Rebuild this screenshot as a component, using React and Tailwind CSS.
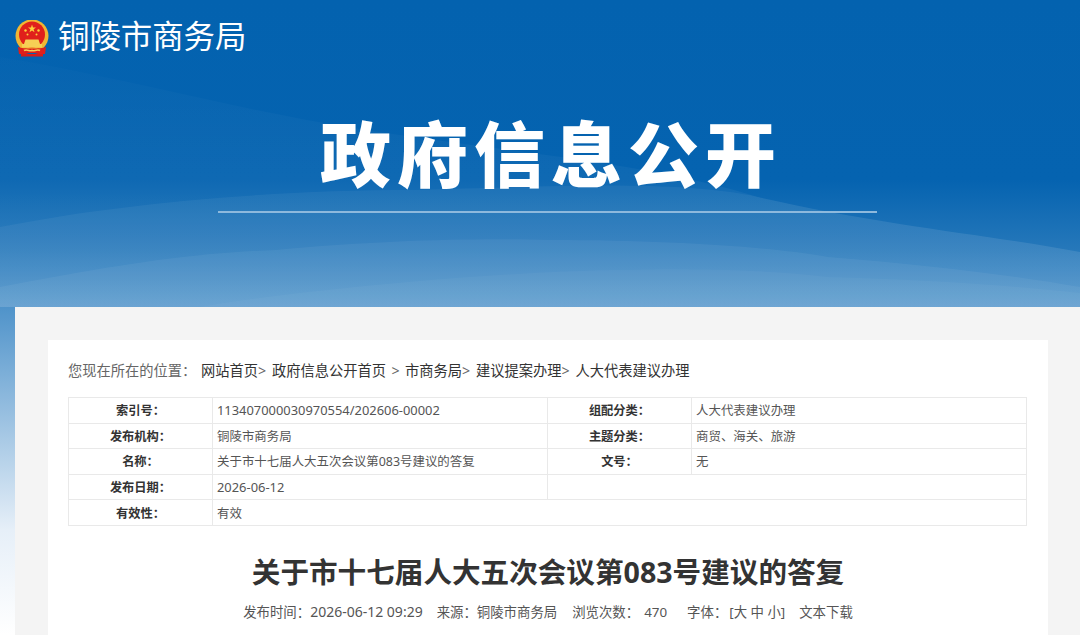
const infoRows = [
  { a: "索引号：", b: <span className="text-[12.9px] leading-none">113407000030970554/202606-00002</span>, c: "组配分类：", d: "人大代表建议办理" },
  { a: "发布机构：", b: "铜陵市商务局", c: "主题分类：", d: "商贸、海关、旅游" },
  { a: "名称：", b: "关于市十七届人大五次会议第083号建议的答复", c: "文号：", d: "无" },
];

const labelCell = "border border-[#e9e9e9] text-center font-bold text-[#333] px-0 pt-[2px] pb-0";
const valueCell = "border border-[#e9e9e9] pl-[4px] pr-0 pt-[2px] pb-0 text-[12.45px] text-[#555]";

function Emblem() {
  return (
    <svg width="34" height="37" viewBox="0 0 34 37" className="shrink-0">
      <circle cx="17" cy="16" r="16.5" fill="#f2b632" />
      <circle cx="17" cy="14.5" r="13" fill="#e0201b" />
      <polygon points="17,4.5 18,7.5 21,7.5 18.6,9.3 19.5,12.2 17,10.4 14.5,12.2 15.4,9.3 13,7.5 16,7.5" fill="#fbd13c" />
      <circle cx="10.5" cy="10.5" r="1.2" fill="#fbd13c" />
      <circle cx="23.5" cy="10.5" r="1.2" fill="#fbd13c" />
      <circle cx="12.5" cy="14.5" r="1" fill="#fbd13c" />
      <circle cx="21.5" cy="14.5" r="1" fill="#fbd13c" />
      <path d="M9 24 L10.5 19.5 H23.5 L25 24 Z" fill="#f6cf55" />
      <rect x="7" y="24" width="20" height="3.5" fill="#f6cf55" />
      <path d="M3 27 C8 29 26 29 31 27 L30 34 H23 L20 33 H14 L11 34 H4 Z" fill="#de1f1b" />
      <path d="M9 30.5 C12 28.5 15 32 17 30.5 C19 32 22 28.5 25 30.5" fill="none" stroke="#f6cf55" strokeWidth="1.6" />
      <rect x="6" y="34" width="22" height="2.5" fill="#d51d19" />
    </svg>
  );
}

function HeaderWaves() {
  return (
    <svg className="absolute left-0 top-0" width="1080" height="307" viewBox="0 0 1080 307">
      <defs>
        <linearGradient id="waveTop" x1="0" y1="0" x2="0" y2="1">
          <stop offset="0" stopColor="#ffffff" stopOpacity="0.01" />
          <stop offset="1" stopColor="#ffffff" stopOpacity="0.07" />
        </linearGradient>
      </defs>
      <path d="M0 57 C110 75 220 105 324 123 C480 150 640 160 758 197 C880 225 990 235 1080 252 V307 H0 Z" fill="url(#waveTop)" />
      <path d="M0 227 C110 205 260 190 414 190 C560 186 680 180 758 197 C880 225 990 235 1080 252 V307 H0 Z" fill="#ffffff" fillOpacity="0.05" />
      <path d="M0 287 C90 270 180 253 276 250 C380 240 480 238 552 240 C680 240 780 248 828 257 C930 265 1010 275 1080 287 V307 H0 Z" fill="#ffffff" fillOpacity="0.05" />
      <path d="M200 307 C330 285 540 270 620 270 C700 268 770 270 828 277 C930 280 1010 285 1080 293 V307 Z" fill="#ffffff" fillOpacity="0.03" />
    </svg>
  );
}

export default function App() {
  return (
    <div className="relative h-[635px] overflow-hidden bg-[linear-gradient(180deg,#0362af_0,#0563b0_180px,#2678ba_250px,#4f93ca_307px,#e6eff8_530px,#ffffff_635px)] font-['Noto_Sans','Noto_Sans_CJK_SC',sans-serif]">
      <HeaderWaves />

      {/* 头部 */}
      <header className="relative h-[307px] flex flex-col">
        <div className="flex items-center gap-[9px] pl-[15px] pt-[20px] h-[57px]">
          <Emblem />
          <span className="mb-[6px] text-[31.4px] leading-[36px] text-white font-normal">铜陵市商务局</span>
        </div>
        <h1 className="mt-[55px] pl-[22px] text-center text-[71px] leading-[84px] tracking-[6px] font-black text-white">
          政府信息公开
        </h1>
        <div className="mt-[15px] ml-[218px] w-[659px] h-[2px] bg-[#8db9dd]" />
      </header>

      {/* 본문 */}
      <main className="relative ml-[15px] bg-[#f4f4f4] pt-[33px] pl-[33px] pr-[32px] h-[328px]">
        <div className="bg-white px-[20px] h-[295px]">
          <div className="flex items-center h-[57px] pt-[5px] text-[14.25px] text-[#333]">
            <span className="w-[133px] text-[#666]">您现在所在的位置：</span>
            <span>网站首页</span>
            <span className="w-[14px] text-[#666]">&gt;</span>
            <span>政府信息公开首页</span>
            <span className="w-[19px] text-center text-[#666]">&gt;</span>
            <span>市商务局</span>
            <span className="w-[14px] text-[#666]">&gt;</span>
            <span>建议提案办理</span>
            <span className="w-[14px] text-[#666]">&gt;</span>
            <span>人大代表建议办理</span>
          </div>

          <table className="w-[958px] table-fixed border-collapse text-[12.25px] leading-[22px]">
            <colgroup>
              <col className="w-[144px]" />
              <col className="w-[335px]" />
              <col className="w-[144px]" />
              <col className="w-[335px]" />
            </colgroup>
            <tbody>
              {infoRows.map((row) => (
                <tr key={row.a} className="h-[25.6px]">
                  <td className={labelCell}>{row.a}</td>
                  <td className={valueCell}>{row.b}</td>
                  <td className={labelCell}>{row.c}</td>
                  <td className={valueCell}>{row.d}</td>
                </tr>
              ))}
              <tr className="h-[25.6px]">
                <td className={labelCell}>发布日期：</td>
                <td className={valueCell}><span className="text-[12.9px] leading-none">2026-06-12</span></td>
                <td className={valueCell} colSpan={2}></td>
              </tr>
              <tr className="h-[25.6px]">
                <td className={labelCell}>有效性：</td>
                <td className={valueCell} colSpan={3}>有效</td>
              </tr>
            </tbody>
          </table>

          <h2 className="mt-[25px] text-center text-[28.6px] leading-[42px] font-bold text-[#333]">
            关于市十七届人大五次会议第083号建议的答复
          </h2>

          <div className="mt-[8px] flex items-center justify-center text-[13.4px] leading-[22px] text-[#555]">
            <span>发布时间：<span className="text-[14px]">2026-06-12 09:29</span></span>
            <span className="ml-[14px]">来源：铜陵市商务局</span>
            <span className="ml-[15px]">浏览次数：</span>
            <span className="ml-[5px]">470</span>
            <span className="ml-[20px]">字体：</span>
            <span className="ml-[2px]">[大 中 小]</span>
            <span className="ml-[14px]">文本下载</span>
          </div>
        </div>
      </main>
    </div>
  );
}
